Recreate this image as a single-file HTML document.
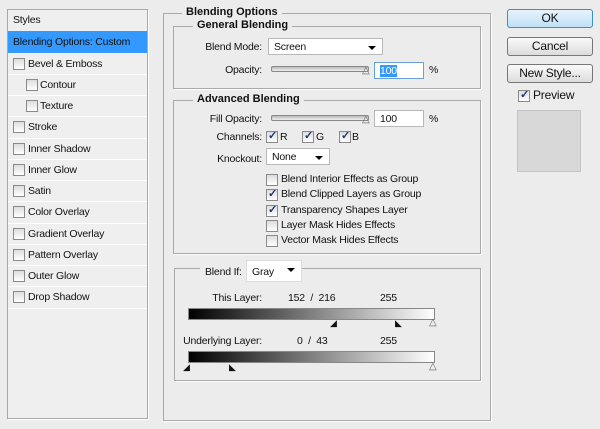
<!DOCTYPE html><html><head><style>
body{margin:0;width:600px;height:429px;background:#ececec;font:10.5px "Liberation Sans",sans-serif;letter-spacing:-0.2px;color:#111;position:relative;overflow:hidden}
.a{position:absolute;white-space:nowrap}
.r{position:absolute;white-space:nowrap;right:338px;text-align:right}
.box{position:absolute;border:1px solid #a9a9a9;box-shadow:1px 1px 0 #fff}
.lg{position:absolute;background:#ececec;font-weight:bold;padding:0 4px;font-size:11px;letter-spacing:0}
.cb{position:absolute;width:10px;height:10px;border:1px solid #8a8a8a;background:linear-gradient(#ddd,#fff)}
.ck:after{content:"✓";position:absolute;left:1px;top:-3px;font-size:11px;color:#22337a;font-weight:bold}
.inp{position:absolute;background:#fff;border:1px solid #b8b8b8;height:17px;line-height:17px;padding-left:5px;box-sizing:border-box}
.dd:after{content:"";position:absolute;right:6px;top:7px;border:4px solid transparent;border-top:4px solid #000;border-bottom:0}
.row{position:absolute;left:8px;width:139px;height:21px;border-top:1px solid #fff;line-height:21px}
.btn{position:absolute;left:507px;width:84px;height:17px;border:1px solid #777;border-radius:3px;background:linear-gradient(#fafafa,#dcdcdc);text-align:center;line-height:17px;font-size:12px}
.sl{position:absolute;height:4px;border:1px solid #888;border-radius:2px;background:linear-gradient(#bbb,#eee)}
.grad{position:absolute;height:10px;border:1px solid #888;background:linear-gradient(90deg,#000,#fff)}
</style></head><body>
<div class="box" style="left:7px;top:9px;width:139px;height:408px;background:#efefef"></div>
<div class="a" style="left:13px;top:14px">Styles</div>
<div class="a" style="left:8px;top:31px;width:139px;height:22px;background:#3399ff;line-height:22px;color:#111"><span style="padding-left:5px">Blending Options: Custom</span></div>
<div class="row" style="top:53px"><span class="cb" style="left:5px;top:4px"></span><span class="a" style="left:20px">Bevel &amp; Emboss</span></div>
<div class="row" style="top:74px"><span class="cb" style="left:18px;top:4px"></span><span class="a" style="left:32px">Contour</span></div>
<div class="row" style="top:95px"><span class="cb" style="left:18px;top:4px"></span><span class="a" style="left:32px">Texture</span></div>
<div class="row" style="top:116px"><span class="cb" style="left:5px;top:4px"></span><span class="a" style="left:20px">Stroke</span></div>
<div class="row" style="top:138px"><span class="cb" style="left:5px;top:4px"></span><span class="a" style="left:20px">Inner Shadow</span></div>
<div class="row" style="top:159px"><span class="cb" style="left:5px;top:4px"></span><span class="a" style="left:20px">Inner Glow</span></div>
<div class="row" style="top:180px"><span class="cb" style="left:5px;top:4px"></span><span class="a" style="left:20px">Satin</span></div>
<div class="row" style="top:201px"><span class="cb" style="left:5px;top:4px"></span><span class="a" style="left:20px">Color Overlay</span></div>
<div class="row" style="top:223px"><span class="cb" style="left:5px;top:4px"></span><span class="a" style="left:20px">Gradient Overlay</span></div>
<div class="row" style="top:244px"><span class="cb" style="left:5px;top:4px"></span><span class="a" style="left:20px">Pattern Overlay</span></div>
<div class="row" style="top:265px"><span class="cb" style="left:5px;top:4px"></span><span class="a" style="left:20px">Outer Glow</span></div>
<div class="row" style="top:286px"><span class="cb" style="left:5px;top:4px"></span><span class="a" style="left:20px">Drop Shadow</span></div>
<div class="a" style="left:8px;top:308px;width:139px;border-top:1px solid #fff"></div>
<div class="box" style="left:163px;top:13px;width:326px;height:406px"></div>
<div class="lg" style="left:182px;top:6px">Blending Options</div>
<div class="box" style="left:173px;top:26px;width:306px;height:61px"></div>
<div class="lg" style="left:193px;top:19px">General Blending</div>
<div class="r" style="top:41px">Blend Mode:</div>
<div class="inp dd" style="left:268px;top:38px;width:115px">Screen</div>
<div class="r" style="top:64px">Opacity:</div>
<div class="sl" style="left:271px;top:66px;width:96px"></div>
<div class="a" style="left:362px;top:65px;font-size:10px;color:#666">△</div>
<div class="inp" style="left:374px;top:62px;width:50px;border-color:#6aa0d8"><span style="background:#3399ff;color:#fff">100</span></div>
<div class="a" style="left:429px;top:64px">%</div>
<div class="box" style="left:173px;top:100px;width:306px;height:152px"></div>
<div class="lg" style="left:193px;top:93px">Advanced Blending</div>
<div class="r" style="top:113px">Fill Opacity:</div>
<div class="sl" style="left:271px;top:115px;width:96px"></div>
<div class="a" style="left:362px;top:114px;font-size:10px;color:#666">△</div>
<div class="inp" style="left:374px;top:110px;width:50px">100</div>
<div class="a" style="left:429px;top:113px">%</div>
<div class="r" style="top:131px">Channels:</div>
<div class="cb ck" style="left:266px;top:131px"></div><div class="a" style="left:280px;top:131px">R</div>
<div class="cb ck" style="left:302px;top:131px"></div><div class="a" style="left:316px;top:131px">G</div>
<div class="cb ck" style="left:339px;top:131px"></div><div class="a" style="left:352px;top:131px">B</div>
<div class="r" style="top:153px">Knockout:</div>
<div class="inp dd" style="left:266px;top:148px;width:64px">None</div>
<div class="cb" style="left:266px;top:174px"></div><div class="a" style="left:281px;top:173px">Blend Interior Effects as Group</div>
<div class="cb ck" style="left:266px;top:189px"></div><div class="a" style="left:281px;top:188px">Blend Clipped Layers as Group</div>
<div class="cb ck" style="left:266px;top:205px"></div><div class="a" style="left:281px;top:204px">Transparency Shapes Layer</div>
<div class="cb" style="left:266px;top:220px"></div><div class="a" style="left:281px;top:219px">Layer Mask Hides Effects</div>
<div class="cb" style="left:266px;top:235px"></div><div class="a" style="left:281px;top:234px">Vector Mask Hides Effects</div>
<div class="box" style="left:174px;top:268px;width:305px;height:111px"></div>
<div class="a" style="left:200px;top:263px;width:48px;height:10px;background:#ececec"></div>
<div class="a" style="left:205px;top:266px">Blend If:</div>
<div class="inp dd" style="left:246px;top:260px;width:56px;height:22px;line-height:22px;border-color:#ddd">Gray</div>
<div class="r" style="top:292px">This Layer:</div>
<div class="a" style="left:288px;top:292px">152 &nbsp;/ &nbsp;216</div>
<div class="a" style="left:380px;top:292px">255</div>
<div class="grad" style="left:188px;top:308px;width:245px"></div>
<div class="a" style="left:330px;top:318px;font-size:9px">◢</div>
<div class="a" style="left:395px;top:318px;font-size:9px">◣</div>
<div class="a" style="left:429px;top:317px;font-size:10px;color:#666">△</div>
<div class="r" style="top:335px">Underlying Layer:</div>
<div class="a" style="left:297px;top:335px">0 &nbsp;/ &nbsp;43</div>
<div class="a" style="left:380px;top:335px">255</div>
<div class="grad" style="left:188px;top:351px;width:245px"></div>
<div class="a" style="left:183px;top:362px;font-size:9px">◢</div>
<div class="a" style="left:229px;top:362px;font-size:9px">◣</div>
<div class="a" style="left:429px;top:361px;font-size:10px;color:#666">△</div>
<div class="btn" style="top:9px;border-color:#3a8fd0;background:linear-gradient(#e8f4fc,#bfe0f6)">OK</div>
<div class="btn" style="top:37px">Cancel</div>
<div class="btn" style="top:64px">New Style...</div>
<div class="cb ck" style="left:518px;top:90px"></div>
<div class="a" style="left:533px;top:88px;font-size:12px">Preview</div>
<div class="a" style="left:517px;top:110px;width:62px;height:60px;background:#d8d8d8;border:1px solid #c4c4c4"></div>
</body></html>
